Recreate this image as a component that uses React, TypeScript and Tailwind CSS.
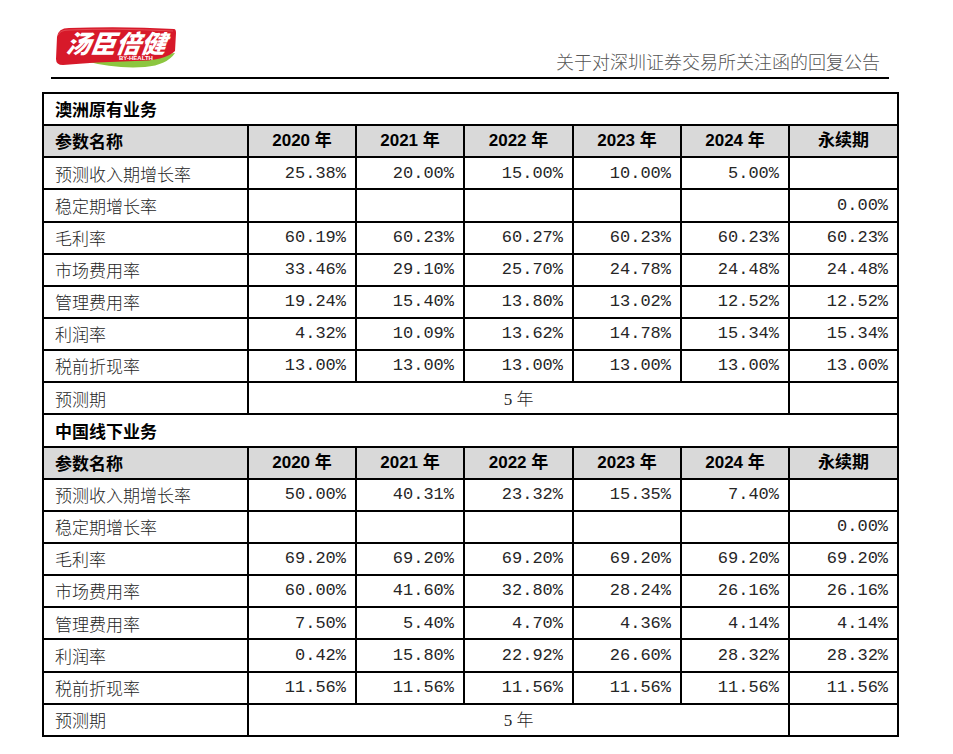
const years = ['2020 年', '2021 年', '2022 年', '2023 年', '2024 年', '永续期'];

type Row = { name: string; values: string[] };

const australia: Row[] = [
	{ name: '预测收入期增长率', values: ['25.38%', '20.00%', '15.00%', '10.00%', '5.00%', ''] },
	{ name: '稳定期增长率', values: ['', '', '', '', '', '0.00%'] },
	{ name: '毛利率', values: ['60.19%', '60.23%', '60.27%', '60.23%', '60.23%', '60.23%'] },
	{ name: '市场费用率', values: ['33.46%', '29.10%', '25.70%', '24.78%', '24.48%', '24.48%'] },
	{ name: '管理费用率', values: ['19.24%', '15.40%', '13.80%', '13.02%', '12.52%', '12.52%'] },
	{ name: '利润率', values: ['4.32%', '10.09%', '13.62%', '14.78%', '15.34%', '15.34%'] },
	{ name: '税前折现率', values: ['13.00%', '13.00%', '13.00%', '13.00%', '13.00%', '13.00%'] },
];

const china: Row[] = [
	{ name: '预测收入期增长率', values: ['50.00%', '40.31%', '23.32%', '15.35%', '7.40%', ''] },
	{ name: '稳定期增长率', values: ['', '', '', '', '', '0.00%'] },
	{ name: '毛利率', values: ['69.20%', '69.20%', '69.20%', '69.20%', '69.20%', '69.20%'] },
	{ name: '市场费用率', values: ['60.00%', '41.60%', '32.80%', '28.24%', '26.16%', '26.16%'] },
	{ name: '管理费用率', values: ['7.50%', '5.40%', '4.70%', '4.36%', '4.14%', '4.14%'] },
	{ name: '利润率', values: ['0.42%', '15.80%', '22.92%', '26.60%', '28.32%', '28.32%'] },
	{ name: '税前折现率', values: ['11.56%', '11.56%', '11.56%', '11.56%', '11.56%', '11.56%'] },
];

const cell = 'border-2 border-black h-[32.15px] p-0';
const song = 'font-["Noto_Sans_CJK_SC",sans-serif] font-light text-[17px] text-[#262626]';
const num = 'font-["Liberation_Mono","Noto_Sans_CJK_SC",monospace] text-[17px] text-[#262626] text-right pr-[9px]';

const Logo = () => (
	<svg width="122" height="44" viewBox="0 0 122 44">
		<path d="M30 36 Q80 33 120 28 Q112 40 90 42 Q60 44 30 36 Z" fill="#8cc63f" />
		<path
			d="M2 12 Q3 3 14 3 Q70 1 119 4 Q121 4 121 8 L120 26 Q110 36 80 36 Q40 37 8 40 Q1 40 1 34 Z"
			fill="#d7192a"
		/>
		<path d="M3 10 Q5 5 14 5 Q60 3 118 6" stroke="#f08080" strokeWidth="1" fill="none" opacity="0.5" />
		<text
			x="8"
			y="28"
			fill="#fff"
			fontSize="25"
			fontWeight="900"
			fontStyle="italic"
			fontFamily="Noto Sans CJK SC, sans-serif"
			transform="skewX(-8) translate(6 0)"
		>
			汤臣倍健
		</text>
		<text x="64" y="35" fill="#fff" fontSize="6" fontWeight="700" fontFamily="Liberation Sans, sans-serif">
			BY-HEALTH
		</text>
	</svg>
);

const Section = ({ title, rows }: { title: string; rows: Row[] }) => (
	<>
		<tr>
			<td colSpan={7} className={`${cell} pl-[11px] font-["Noto_Sans_CJK_SC",sans-serif] font-bold text-[17px] text-black`}>
				{title}
			</td>
		</tr>
		<tr className="bg-[#d9d9d9]">
			<td className={`${cell} pl-[11px] font-["Noto_Sans_CJK_SC",sans-serif] font-bold text-[17px] text-black`}>参数名称</td>
			{years.map((y) => (
				<td
					key={y}
					className={`${cell} text-center font-["Liberation_Sans","Noto_Sans_CJK_SC",sans-serif] font-bold text-[17px] text-black`}
				>
					{y}
				</td>
			))}
		</tr>
		{rows.map((r) => (
			<tr key={r.name}>
				<td className={`${cell} pl-[11px] ${song}`}>{r.name}</td>
				{r.values.map((v, i) => (
					<td key={i} className={`${cell} ${num}`}>
						{v}
					</td>
				))}
			</tr>
		))}
		<tr>
			<td className={`${cell} pl-[11px] ${song}`}>预测期</td>
			<td colSpan={5} className={`${cell} text-center font-["Liberation_Serif","Noto_Sans_CJK_SC",serif] text-[17px] text-[#262626]`}>
				5 <span className="font-light font-['Noto_Sans_CJK_SC',sans-serif]">年</span>
			</td>
			<td className={cell}></td>
		</tr>
	</>
);

const App = () => {
	return (
		<div className="w-[953px] h-[754px] bg-white overflow-hidden">
			<div className="flex items-end justify-between pl-[55px] pr-[73px] pt-[25px]">
				<Logo />
				<div className='-mb-[4px] font-["Noto_Sans_CJK_SC",sans-serif] font-light text-[18px] leading-[24px] text-[#555]'>
					关于对深圳证券交易所关注函的回复公告
				</div>
			</div>
			<div className="ml-[51px] mt-[8px] w-[838px] h-[2px] bg-black" />
			<div className="pl-[42px] pt-[13px]">
				<table className="border-collapse table-fixed w-[855px]">
					<colgroup>
						<col className="w-[205px]" />
						<col className="w-[108px]" />
						<col className="w-[108px]" />
						<col className="w-[109px]" />
						<col className="w-[108px]" />
						<col className="w-[108px]" />
						<col className="w-[109px]" />
					</colgroup>
					<tbody>
						<Section title="澳洲原有业务" rows={australia} />
						<Section title="中国线下业务" rows={china} />
					</tbody>
				</table>
			</div>
		</div>
	);
};

export default App;
